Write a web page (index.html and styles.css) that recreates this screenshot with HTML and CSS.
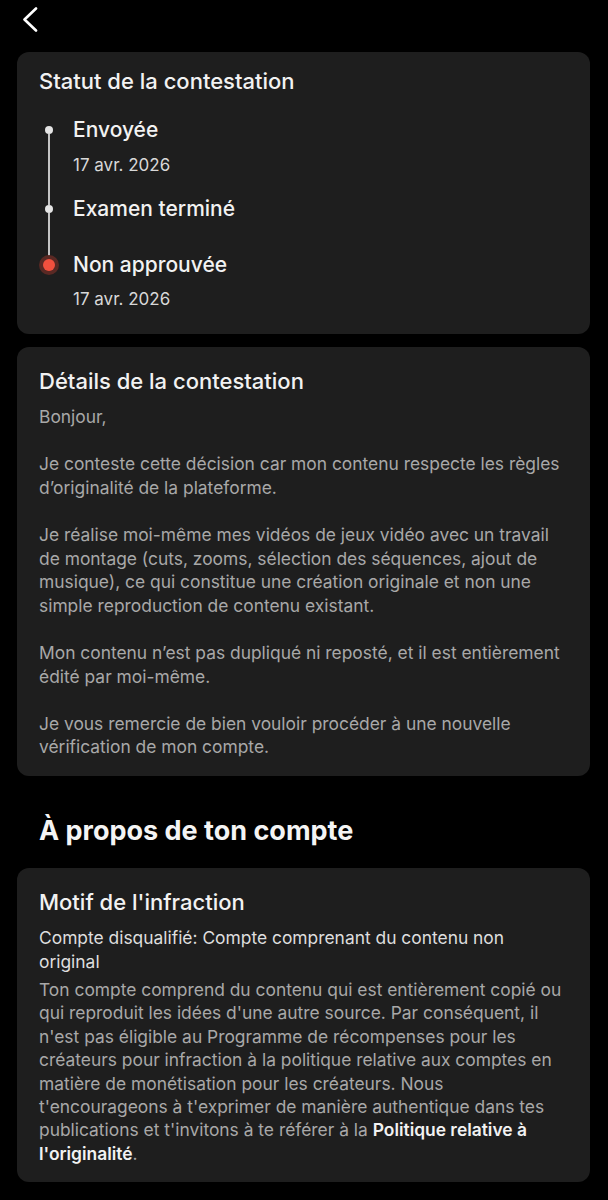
FILE: index.html
```html
<!DOCTYPE html>
<html lang="fr">

<head>
    <meta charset="UTF-8" />
    <meta name="viewport" content="width=device-width, initial-scale=1.0" />
    <title>Contestation</title>
    <link rel="stylesheet" href="styles.css">
</head>

<body>
    <header class="topbar">
        <svg class="back" width="16" height="25" viewBox="0 0 16 25">
            <path d="M14 1.5 L2.5 12.5 L14 23.5" fill="none" stroke="#fff" stroke-width="2.6" stroke-linecap="round" stroke-linejoin="round" />
        </svg>
    </header>

    <section class="card status">
        <h2 class="card-title">Statut de la contestation</h2>
        <div class="timeline">
            <div class="step first">
                <div class="rail"><span class="seg top"></span><span class="dot"></span><span class="seg bottom"></span></div>
                <div class="info with-date">
                    <div class="label">Envoyée</div>
                    <div class="date">17 avr. 2026</div>
                </div>
            </div>
            <div class="step">
                <div class="rail"><span class="seg top"></span><span class="dot"></span><span class="seg bottom"></span></div>
                <div class="info no-date">
                    <div class="label">Examen terminé</div>
                </div>
            </div>
            <div class="step last">
                <div class="rail"><span class="seg top"></span><span class="dot red"></span><span class="seg bottom"></span></div>
                <div class="info">
                    <div class="label">Non approuvée</div>
                    <div class="date">17 avr. 2026</div>
                </div>
            </div>
        </div>
    </section>

    <section class="card">
        <h2 class="card-title">Détails de la contestation</h2>
        <div class="letter">
            <p>Bonjour,</p>
            <p>Je conteste cette décision car mon contenu respecte les règles d’originalité de la plateforme.</p>
            <p>Je réalise moi-même mes vidéos de jeux vidéo avec un travail de montage (cuts, zooms, sélection des séquences, ajout de musique), ce qui constitue une création originale et non une simple reproduction de contenu existant.</p>
            <p>Mon contenu n’est pas dupliqué ni reposté, et il est entièrement édité par moi-même.</p>
            <p>Je vous remercie de bien vouloir procéder à une nouvelle vérification de mon compte.</p>
        </div>
    </section>

    <h1 class="section-title">À propos de ton compte</h1>

    <section class="card">
        <h2 class="card-title">Motif de l'infraction</h2>
        <p class="reason">Compte disqualifié: Compte comprenant du contenu non original</p>
        <p class="explain">Ton compte comprend du contenu qui est entièrement copié ou qui reproduit les idées d'une autre source. Par conséquent, il n'est pas éligible au Programme de récompenses pour les créateurs pour infraction à la politique relative aux comptes en matière de monétisation pour les créateurs. Nous t'encourageons à t'exprimer de manière authentique dans tes publications et t'invitons à te référer à la <a href="#">Politique relative à l'originalité</a>.</p>
    </section>
</body>

</html>
```

FILE: styles.css
```css
body {
    margin: 0;
    padding: 0 18px 0 17px;
    background: #000;
    color: #f2f2f2;
    font-family: Inter, "Noto Sans", sans-serif;
}

.topbar {
    height: 52px;
    box-sizing: border-box;
    padding: 7px 0 0 5px;
}

.back {
    display: block;
}

.card {
    background: #1e1e1e;
    border-radius: 12px;
    padding: 21px 24px 17px 22px;
    margin-bottom: 13px;
}

.card.status {
    padding-top: 16px;
    padding-bottom: 24px;
}

.card-title {
    margin: 0;
    font-size: 22px;
    line-height: 26px;
    font-weight: 500;
    color: #f2f2f2;
}

/* timeline */
.timeline {
    margin-top: 22px;
}

.step {
    display: flex;
}

.rail {
    width: 20px;
    margin-right: 14px;
    display: flex;
    flex-direction: column;
    align-items: center;
}

.seg {
    width: 2px;
    background: #c4c4c4;
}

.seg.top {
    height: 10px;
}

.seg.bottom {
    flex: 1;
}

.first .seg.top,
.last .seg.bottom {
    background: transparent;
}

.dot {
    width: 8px;
    height: 8px;
    border-radius: 50%;
    background: #e4e4e4;
    flex-shrink: 0;
}

.dot.red {
    width: 12px;
    height: 12px;
    background: #f2503e;
    box-shadow: 0 0 0 4px #5a2924;
}

.last .seg.top {
    height: 8px;
}

.label {
    font-size: 21px;
    line-height: 28px;
    font-weight: 500;
    color: #f2f2f2;
}

.date {
    margin-top: 9px;
    font-size: 17px;
    line-height: 22px;
    color: #d8d8d8;
}

.info.with-date {
    padding-bottom: 19px;
}

.info.with-date .date {
    margin-top: 10px;
}

.info.no-date {
    padding-bottom: 28px;
}

/* letter */
.letter {
    margin-top: 11px;
}

.letter p {
    margin: 0 0 23.6px;
    font-size: 17.4px;
    line-height: 23.6px;
    color: #a8a8a8;
}

.letter p:last-child {
    margin-bottom: 0;
}

.section-title {
    margin: 38px 0 20px 22px;
    font-size: 27px;
    line-height: 34px;
    font-weight: 700;
    color: #f4f4f4;
}

.reason {
    margin: 11px 0 4px;
    font-size: 17.4px;
    line-height: 24px;
    color: #dedede;
}

.explain {
    margin: 0;
    font-size: 17.4px;
    line-height: 23.4px;
    color: #a8a8a8;
}

.explain a {
    color: #f2f2f2;
    font-weight: 600;
    text-decoration: none;
}
```
